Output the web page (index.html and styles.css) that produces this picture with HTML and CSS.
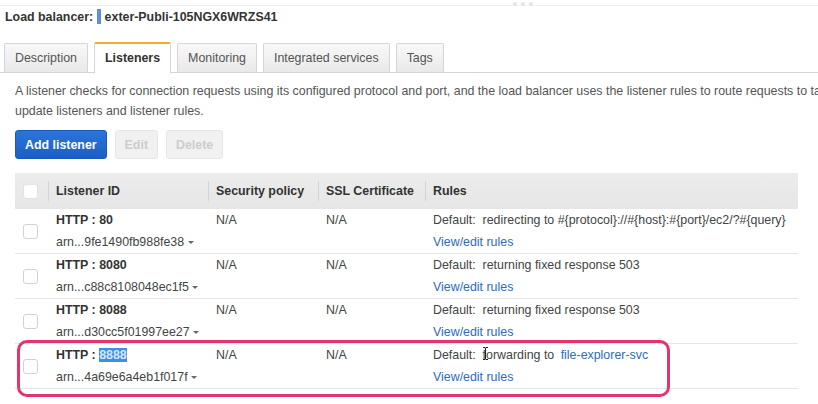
FILE: index.html
```html
<!DOCTYPE html>
<html>
<head>
<meta charset="utf-8">
<link rel="stylesheet" href="styles.css">
</head>
<body>
<div class="topbar"><span class="dots"><i></i><i></i><i></i></span></div>
<div class="title"><b>Load balancer:</b> <span class="sel-bar"></span><b>exter-Publi-105NGX6WRZS41</b></div>
<div class="tabs">
  <div class="tab">Description</div>
  <div class="tab active">Listeners</div>
  <div class="tab">Monitoring</div>
  <div class="tab">Integrated services</div>
  <div class="tab">Tags</div>
</div>
<div class="desc">
  <div class="line">A listener checks for connection requests using its configured protocol and port, and the load balancer uses the listener rules to route requests to targets. You can add, remove, or</div>
  <div class="line">update listeners and listener rules.</div>
</div>
<div class="actions">
  <button class="btn primary">Add listener</button>
  <button class="btn disabled">Edit</button>
  <button class="btn disabled">Delete</button>
</div>
<div class="grid">
  <div class="row head">
    <div class="cell chk"><span class="box"></span></div>
    <div class="cell"><span class="sep"></span>Listener ID</div>
    <div class="cell"><span class="sep"></span>Security policy</div>
    <div class="cell"><span class="sep"></span>SSL Certificate</div>
    <div class="cell"><span class="sep"></span>Rules</div>
  </div>
  <div class="row">
    <div class="cell chk"><span class="box"></span></div>
    <div class="cell"><div class="proto">HTTP : 80</div><div>arn...9fe1490fb988fe38 <span class="caret"></span></div></div>
    <div class="cell">N/A</div>
    <div class="cell">N/A</div>
    <div class="cell"><div>Default:&nbsp; redirecting to #{protocol}://#{host}:#{port}/ec2/?#{query}</div><div class="link">View/edit rules</div></div>
  </div>
  <div class="row">
    <div class="cell chk"><span class="box"></span></div>
    <div class="cell"><div class="proto">HTTP : 8080</div><div>arn...c88c8108048ec1f5 <span class="caret"></span></div></div>
    <div class="cell">N/A</div>
    <div class="cell">N/A</div>
    <div class="cell"><div>Default:&nbsp; returning fixed response 503</div><div class="link">View/edit rules</div></div>
  </div>
  <div class="row">
    <div class="cell chk"><span class="box"></span></div>
    <div class="cell"><div class="proto">HTTP : 8088</div><div>arn...d30cc5f01997ee27 <span class="caret"></span></div></div>
    <div class="cell">N/A</div>
    <div class="cell">N/A</div>
    <div class="cell"><div>Default:&nbsp; returning fixed response 503</div><div class="link">View/edit rules</div></div>
  </div>
  <div class="row marked">
    <div class="cell chk"><span class="box"></span></div>
    <div class="cell"><div class="proto">HTTP : <span class="hl">8888</span></div><div>arn...4a69e6a4eb1f017f <span class="caret"></span></div></div>
    <div class="cell">N/A</div>
    <div class="cell">N/A</div>
    <div class="cell"><div>Default:&nbsp; f<span class="cursorwrap"><svg class="ibeam" width="7" height="13" viewBox="0 0 7 13"><path d="M1 0.5h2l0.5 0.6 0.5-0.6h2M3.5 1v11M1 12.5h2l0.5-0.6 0.5 0.6h2" fill="none" stroke="#222" stroke-width="1"/></svg></span>orwarding to <span class="link target">file-explorer-svc</span></div><div class="link">View/edit rules</div></div>
    <div class="ring"></div>
  </div>
</div>
</body>
</html>
```
FILE: styles.css
```css
html {
  overflow: hidden;
}
html, body {
  margin: 0;
  padding: 0;
  background: #fff;
}
body {
  font-family: "Liberation Sans", Arial, sans-serif;
  font-size: 12.4px;
  color: #444;
  width: 818px;
  padding-bottom: 20px;
}
.topbar {
  height: 5px;
  border-bottom: 1px solid #efefef;
  position: relative;
}
.dots {
  position: absolute;
  left: 513px;
  top: 2px;
  display: flex;
  gap: 4px;
}
.dots i {
  width: 4px;
  height: 4px;
  border-radius: 50%;
  background: #e4e4e4;
}
.title {
  line-height: 22px;
  padding-left: 5px;
  color: #333;
  white-space: nowrap;
}
.sel-bar {
  display: inline-block;
  width: 4px;
  height: 15px;
  background: #5b8fd6;
  vertical-align: -3px;
  margin-right: 4px;
}
.tabs {
  margin-top: 14px;
  display: flex;
  align-items: flex-end;
  gap: 6px;
  padding-left: 4px;
  border-bottom: 1px solid #d4d4d4;
  height: 30px;
}
.tab {
  height: 28px;
  line-height: 28px;
  padding: 0 10px;
  border: 1px solid #d6d6d6;
  border-bottom: none;
  border-radius: 2px 2px 0 0;
  background: linear-gradient(#f8f8f8, #e9e9e9);
  color: #555;
  white-space: nowrap;
}
.tab.active {
  background: #fff;
  border-top: 2px solid #f0ac2a;
  font-weight: bold;
  color: #333;
  margin-bottom: -1px;
  height: 29px;
  padding: 0 10px;
}
.desc {
  margin-top: 8px;
  padding-left: 15px;
  line-height: 20px;
  color: #555;
}
.line {
  white-space: nowrap;
}
.actions {
  margin-top: 9px;
  padding-left: 15px;
  display: flex;
  gap: 8px;
}
.btn {
  font-family: inherit;
  font-size: 12.4px;
  font-weight: bold;
  height: 29px;
  padding: 0 9px;
  border-radius: 3px;
  border: 1px solid transparent;
}
.btn.primary {
  background: linear-gradient(#2c74da, #1b5fc6);
  border-color: #1a5ab9;
  color: #fff;
}
.btn.disabled {
  background: #f1f1f1;
  border-color: #e6e6e6;
  color: #cdcdcd;
}
.grid {
  margin: 14px 0 0 15px;
  width: 783px;
}
.row {
  display: grid;
  grid-template-columns: 33px 160px 110px 107px 1fr;
  height: 44px;
  border-bottom: 1px solid #e6e6e6;
  position: relative;
  line-height: 22px;
}
.row.head {
  height: 36px;
  background: linear-gradient(#ececec, #e6e6e6);
  border-bottom: none;
  font-weight: bold;
  color: #333;
  line-height: 36px;
}
.cell {
  padding-left: 8px;
  white-space: nowrap;
  position: relative;
}
.cell.chk {
  padding-left: 8px;
  display: flex;
  align-items: center;
}
.box {
  width: 13px;
  height: 13px;
  border: 1px solid #d2d2d2;
  border-radius: 3px;
  background: #fff;
}
.head .box {
  border-color: #e2e2e2;
}
.sep {
  position: absolute;
  left: 0;
  top: 8px;
  height: 20px;
  width: 1px;
  background: #d4d4d4;
}
.proto {
  font-weight: bold;
  color: #333;
}
.caret {
  display: inline-block;
  width: 0;
  height: 0;
  border-left: 3px solid transparent;
  border-right: 3px solid transparent;
  border-top: 3px solid #666;
  vertical-align: 2px;
}
.link {
  color: #2d6cbc;
}
.link.target {
  margin-left: 3px;
}
.hl {
  background: #3d8ee6;
  color: #d6e8ff;
}
.cursorwrap {
  position: relative;
}
.ibeam {
  position: absolute;
  left: -4px;
  top: -1px;
}
.ring {
  position: absolute;
  left: 2px;
  top: -4px;
  width: 653px;
  height: 57px;
  box-sizing: border-box;
  border: 3px solid #e2356c;
  border-radius: 10px;
  pointer-events: none;
}
```
